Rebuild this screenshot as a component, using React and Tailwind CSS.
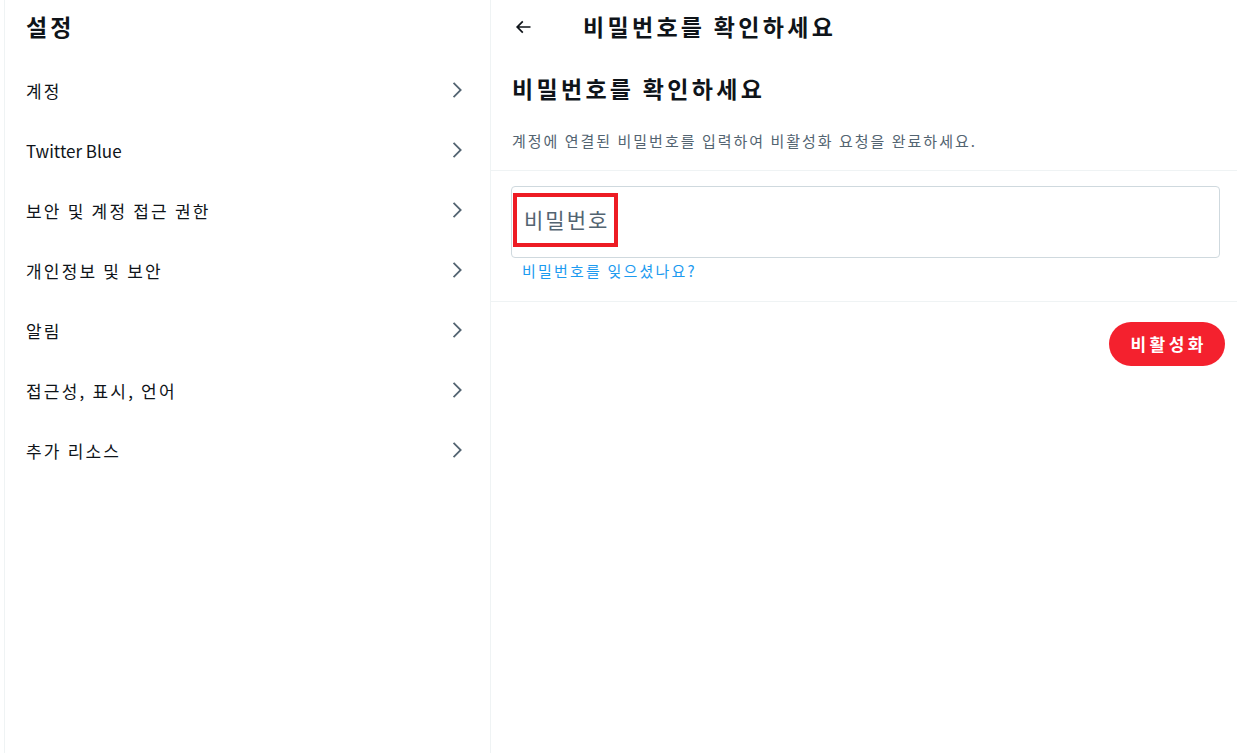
import React from 'react';

const FONT = { fontFamily: '"Noto Sans CJK KR", "Noto Sans", "Liberation Sans", sans-serif' };

const menuItems = [
  { label: '계정', latin: false },
  { label: 'Twitter Blue', latin: true },
  { label: '보안 및 계정 접근 권한', latin: false },
  { label: '개인정보 및 보안', latin: false },
  { label: '알림', latin: false },
  { label: '접근성, 표시, 언어', latin: false },
  { label: '추가 리소스', latin: false },
];

function Chevron() {
  return (
    <svg viewBox="0 0 24 24" className="w-[22px] h-[22px] text-[#536471]" fill="currentColor">
      <path d="M14.586 12L7.543 4.96l1.414-1.42L17.414 12l-8.457 8.46-1.414-1.42L14.586 12z" />
    </svg>
  );
}

function BackArrow() {
  return (
    <svg viewBox="0 0 24 24" className="w-[20px] h-[20px] text-[#0f1419]" fill="currentColor">
      <path d="M7.414 13l5.043 5.04-1.414 1.42L3.586 12l7.457-7.46 1.414 1.42L7.414 11H21v2H7.414z" />
    </svg>
  );
}

export default function App() {
  return (
    <div className="flex w-[1237px] h-[753px] bg-white text-[#0f1419] overflow-hidden" style={FONT}>
      {/* settings column */}
      <div className="ml-[4px] w-[487px] shrink-0 border-x border-[#eff3f4] flex flex-col">
        <div className="h-[53px] flex items-center pl-[21px]">
          <h2 className="text-[23px] font-bold leading-none tracking-[3px]">설정</h2>
        </div>
        <ul className="pt-[7px]">
          {menuItems.map((item) => (
            <li key={item.label} className="h-[60px] flex items-center justify-between pl-[21px] pr-[22px]">
              <span className={item.latin ? 'text-[17px] leading-none' : 'text-[17px] leading-none tracking-[2.2px]'}>
                {item.label}
              </span>
              <Chevron />
            </li>
          ))}
        </ul>
      </div>

      {/* detail column */}
      <div className="flex-1 flex flex-col">
        <div className="h-[53px] flex items-center pl-[22px]">
          <BackArrow />
          <h2 className="ml-[50px] text-[23px] font-bold leading-none tracking-[3.3px]">비밀번호를 확인하세요</h2>
        </div>
        <div className="h-[118px] pl-[21px] border-b border-[#eff3f4] flex flex-col">
          <h1 className="mt-[24px] text-[23px] font-bold leading-none tracking-[3.3px]">비밀번호를 확인하세요</h1>
          <p className="mt-[33px] text-[15px] leading-none tracking-[2px] text-[#536471]">
            계정에 연결된 비밀번호를 입력하여 비활성화 요청을 완료하세요.
          </p>
        </div>
        <div className="h-[131px] border-b border-[#eff3f4] pl-[20px] pr-[17px] pt-[15px]">
          <div className="h-[72px] rounded-[4px] border border-[#cfd9de] pt-[6px] pl-[1px]">
            <span className="inline-flex items-center h-[54px] pl-[7px] pr-[5px] border-4 border-[#ed1c24] text-[21px] tracking-[2px] text-[#536471]">
              비밀번호
            </span>
          </div>
          <a className="block mt-[5px] ml-[11px] text-[15px] leading-none tracking-[2.2px] text-[#1d9bf0]">비밀번호를 잊으셨나요?</a>
        </div>
        <div className="flex justify-end pr-[12px] pt-[20px]">
          <button className="h-[44px] pl-[21px] pr-[18px] rounded-full bg-[#f4212e] text-white text-[17px] font-bold tracking-[3.5px]">
            비활성화
          </button>
        </div>
      </div>
    </div>
  );
}
